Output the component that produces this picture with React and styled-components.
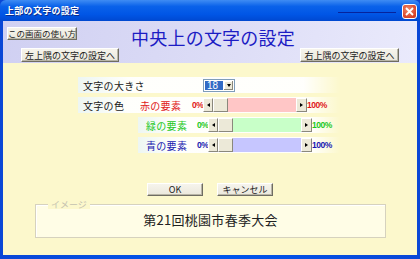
import React from "react";
import styled, { createGlobalStyle } from "styled-components";

const Global = createGlobalStyle`
  html, body { margin: 0; padding: 0; background: #fff; }
  body { font-family: "Noto Sans CJK JP", "Noto Sans", sans-serif; }
`;

const colors = [
  { key: "r", label: "赤の要素", text: "#e01818", track: "#ffc6c6" },
  { key: "g", label: "緑の要素", text: "#1cc81c", track: "#c8ffc8" },
  { key: "b", label: "青の要素", text: "#1818b0", track: "#c6c6ff" },
];

const App = () => {
  return (
    <>
      <Global />
      <Frame>
        <TitleBar>
          <TitleText>上部の文字の設定</TitleText>
          <TitleLine />
          <CloseBtn>
            <svg width="9" height="9" viewBox="0 0 9 9">
              <path d="M1 1L8 8M8 1L1 8" stroke="#fff" strokeWidth="1.8" />
            </svg>
          </CloseBtn>
        </TitleBar>
        <Client>
          <Header>
            <HeaderTop>
              <HelpCell>
                <Btn $w={70} $h={13} $fs={8.5}>この画面の使い方</Btn>
              </HelpCell>
              <Heading>中央上の文字の設定</Heading>
              <span />
            </HeaderTop>
            <HeaderNav>
              <Btn $w={98} $h={14}>左上隅の文字の設定へ</Btn>
              <Btn $w={99} $h={14}>右上隅の文字の設定へ</Btn>
            </HeaderNav>
          </Header>
          <Body>
            <Rows>
              <Band $inset={75}>
                <Label $w={120}>文字の大きさ</Label>
                <Select>
                  <SelectValue>18</SelectValue>
                  <DropBtn />
                </Select>
              </Band>
              {colors.map((c, i) => (
                <Band key={c.key} $inset={i === 0 ? 75 : 135}>
                  {i === 0 && <Label $w={57}>文字の色</Label>}
                  <Label $w={i === 0 ? 52 : 54} $color={c.text} $pad={i === 0 ? 0 : 3}>
                    {c.label}
                  </Label>
                  <Pct $color={c.text} $w={11}>0%</Pct>
                  <Scroll>
                    <Arrow $dir="left" />
                    <Thumb />
                    <Track $bg={c.track} />
                    <Arrow $dir="right" />
                  </Scroll>
                  <Pct $color={c.text} $w={26}>100%</Pct>
                </Band>
              ))}
            </Rows>
            <Actions>
              <Btn $w={56} $h={13}>OK</Btn>
              <Btn $w={56} $h={13}>キャンセル</Btn>
            </Actions>
            <Group>
              <Legend>イメージ</Legend>
              <Preview>第21回桃園市春季大会</Preview>
            </Group>
          </Body>
        </Client>
      </Frame>
    </>
  );
};

const Frame = styled.div`
  width: 420px;
  height: 259px;
  box-sizing: border-box;
  display: flex;
  flex-direction: column;
  background: linear-gradient(90deg, #0a47d6, #0058ee 50%, #0a47d6);
  padding: 0 3px 4px 3px;
`;

const TitleBar = styled.div`
  height: 21px;
  margin: 0 -3px;
  padding: 0 3px 0 5px;
  display: flex;
  align-items: center;
  background: linear-gradient(#3f8cf3 0%, #0a62ea 30%, #0055e5 70%, #0048d0 100%);
  border-radius: 6px 6px 0 0;
`;

const TitleText = styled.span`
  color: #fff;
  font-size: 9px;
  font-weight: 700;
  letter-spacing: 0.3px;
  text-shadow: 1px 1px 0 #0a2a8a;
`;

const TitleLine = styled.span`
  margin-left: auto;
  margin-right: 6px;
  margin-top: 4px;
  width: 58px;
  height: 1px;
  background: #06239c;
`;

const CloseBtn = styled.span`
  width: 15px;
  height: 15px;
  box-sizing: border-box;
  margin-top: 2px;
  display: flex;
  align-items: center;
  justify-content: center;
  border: 1px solid #fff;
  border-radius: 3px;
  background: radial-gradient(circle at 40% 35%, #f08a6a, #d8452a 70%, #c03a20);
`;

const Client = styled.div`
  flex: 1;
  display: flex;
  flex-direction: column;
  background: #fcf8cc;
`;

const Header = styled.div`
  height: 42px;
  box-sizing: border-box;
  padding-top: 5px;
  display: flex;
  flex-direction: column;
  background: linear-gradient(100deg, #d0d0f2 0%, #dcdcf6 50%, #eaeafc 100%);
`;

const HeaderTop = styled.div`
  display: grid;
  grid-template-columns: 1fr auto 1fr;
  align-items: start;
  height: 22px;
`;

const HelpCell = styled.div`
  padding: 1px 0 0 4px;
`;

const Heading = styled.h1`
  margin: 1px 0 0 6px;
  font-size: 18px;
  line-height: 20px;
  font-weight: 400;
  color: #1c1cc4;
  letter-spacing: 0.2px;
`;

const HeaderNav = styled.div`
  display: flex;
  justify-content: space-between;
  padding: 0 18px 0 18px;
`;

const Btn = styled.button`
  width: ${(p) => p.$w}px;
  height: ${(p) => p.$h}px;
  box-sizing: border-box;
  padding: 0;
  font-family: "Noto Sans CJK JP", sans-serif;
  font-size: ${(p) => p.$fs || 9}px;
  line-height: 1;
  color: #222;
  background: linear-gradient(#f6f4ec, #ebe8dc);
  border: 1px solid;
  border-color: #fff #6e6c62 #6e6c62 #fff;
  box-shadow: inset -1px -1px 0 #b8b5a6;
  white-space: nowrap;
  display: flex;
  align-items: center;
  justify-content: center;
`;

const Body = styled.div`
  flex: 1;
  display: flex;
  flex-direction: column;
  padding-top: 14px;
`;

const Rows = styled.div`
  display: flex;
  flex-direction: column;
  gap: 4px;
`;

const Band = styled.div`
  margin-left: ${(p) => p.$inset}px;
  width: ${(p) => 262 - (p.$inset - 75)}px;
  height: 16px;
  display: flex;
  align-items: center;
  padding-left: 5px;
  box-sizing: border-box;
  background: linear-gradient(
    90deg,
    rgba(236, 246, 246, 0.9) 0%,
    rgba(255, 255, 255, 0.95) 20%,
    rgba(255, 255, 255, 0.95) 86%,
    rgba(255, 255, 255, 0) 100%
  );
`;

const Label = styled.span`
  width: ${(p) => p.$w}px;
  padding-left: ${(p) => p.$pad || 0}px;
  flex-shrink: 0;
  box-sizing: border-box;
  font-size: 10px;
  letter-spacing: 0.3px;
  color: ${(p) => p.$color || "#222"};
  white-space: nowrap;
`;

const Pct = styled.span`
  width: ${(p) => p.$w}px;
  flex-shrink: 0;
  font-family: "Liberation Sans", sans-serif;
  font-size: 8.5px;
  font-weight: 700;
  letter-spacing: -0.5px;
  color: ${(p) => p.$color};
`;

const Select = styled.div`
  width: 32px;
  height: 13px;
  box-sizing: border-box;
  border: 1px solid #7f9db9;
  background: #fff;
  display: flex;
  padding: 1px;
`;

const SelectValue = styled.span`
  flex: 1;
  background: #316ac5;
  color: #fff;
  font-family: "Liberation Sans", sans-serif;
  font-size: 10px;
  line-height: 9px;
  padding-left: 2px;
`;

const DropBtn = styled.span`
  width: 9px;
  margin-left: 1px;
  background: #ece9d8;
  box-shadow: inset -1px -1px 0 #8a887c, inset 1px 1px 0 #fff;
  display: flex;
  align-items: center;
  justify-content: center;
  &::before {
    content: "";
    border-left: 2.5px solid transparent;
    border-right: 2.5px solid transparent;
    border-top: 3px solid #000;
  }
`;

const Scroll = styled.div`
  width: 104px;
  height: 14px;
  flex-shrink: 0;
  display: flex;
`;

const Arrow = styled.span`
  width: ${(p) => (p.$dir === "left" ? 10 : 11)}px;
  box-sizing: border-box;
  background: #ece9d8;
  border: 1px solid;
  border-color: #fff #8a887c #8a887c #fff;
  display: flex;
  align-items: center;
  justify-content: center;
  &::before {
    content: "";
    border-top: 2.5px solid transparent;
    border-bottom: 2.5px solid transparent;
    ${(p) =>
      p.$dir === "left"
        ? "border-right: 3px solid #000;"
        : "border-left: 3px solid #000;"}
  }
`;

const Thumb = styled.span`
  width: 15px;
  box-sizing: border-box;
  background: #ece9d8;
  border: 1px solid;
  border-color: #fff #8a887c #8a887c #fff;
`;

const Track = styled.span`
  flex: 1;
  background: ${(p) => p.$bg};
`;

const Actions = styled.div`
  display: flex;
  justify-content: center;
  gap: 14px;
  margin-top: 30px;
`;

const Group = styled.fieldset`
  margin: 4px 0 0 32px;
  width: 351px;
  height: 38px;
  box-sizing: border-box;
  padding: 0;
  border: 1px solid #d6d2be;
  box-shadow: inset 1px 1px 0 #fff;
  background: #fffde6;
  display: flex;
  align-items: center;
  justify-content: center;
`;

const Legend = styled.legend`
  margin-left: 12px;
  padding: 0 3px;
  font-size: 9px;
  line-height: 1;
  color: #c4c2b0;
  background: #fcf8cc;
`;

const Preview = styled.div`
  margin-top: 1px;
  font-size: 13px;
  color: #222;
  letter-spacing: 0.3px;
`;

export default App;
